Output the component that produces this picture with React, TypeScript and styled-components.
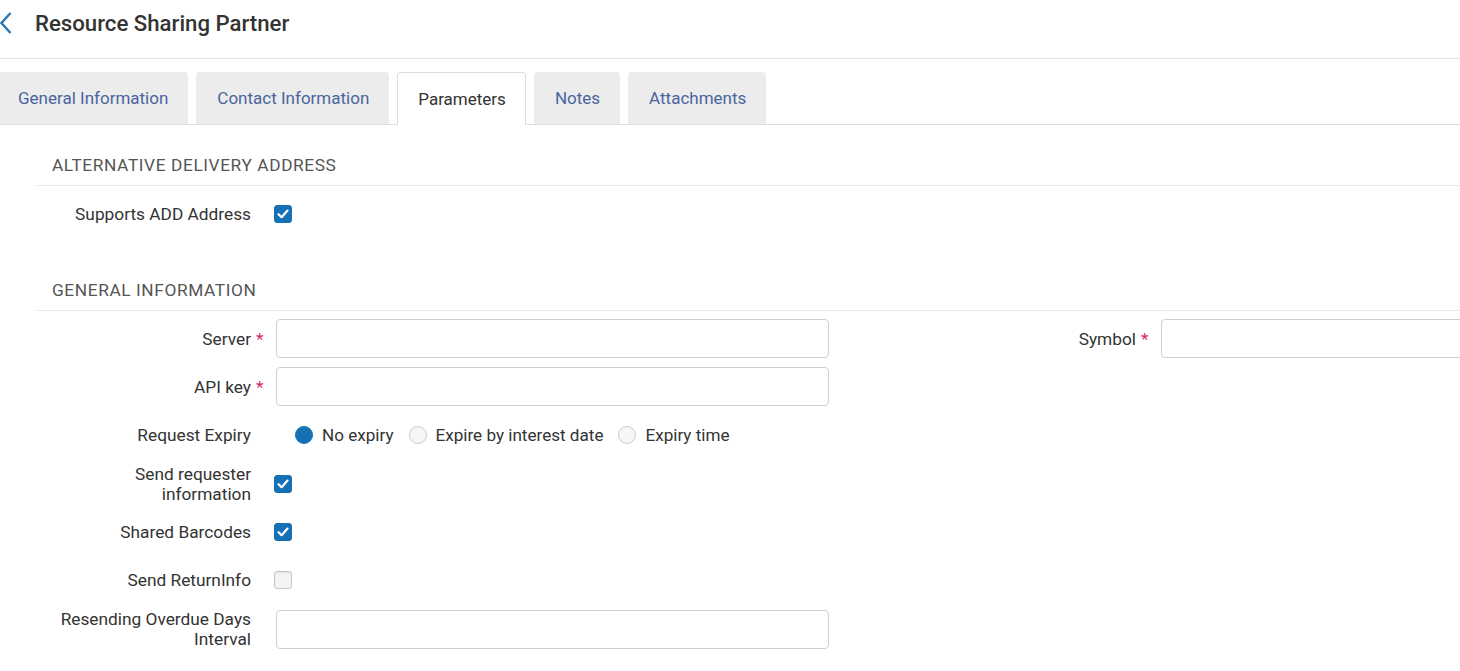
import styled, { createGlobalStyle } from "styled-components"

const GlobalStyle = createGlobalStyle`
    html, body {
        margin: 0;
        padding: 0;
        background: #fff;
        overflow: hidden;
    }
    body {
        font-family: Roboto, "Liberation Sans", Arial, sans-serif;
        color: #333;
    }
`

const Page = styled.div`
    width: 1460px;
    min-height: 671px;
    background: #fff;
`

const Header = styled.header`
    display: flex;
    align-items: center;
    height: 45px;
    padding-bottom: 13px;
    border-bottom: 1px solid #e4e4e4;
    gap: 23px;
    svg {
        flex: none;
    }
`

const Title = styled.h1`
    margin: 0;
    font-size: 22.2px;
    font-weight: 500;
    color: #333;
    line-height: 26px;
`

const TabBar = styled.nav`
    display: flex;
    gap: 8px;
    margin-top: 13px;
    margin-left: -3px;
    border-bottom: 1px solid #dcdcdc;
    height: 52px;
`

const Tab = styled.div<{ $active?: boolean }>`
    display: flex;
    align-items: center;
    padding: 0 19px 1px 20px;
    height: ${(p) => (p.$active ? "53px" : "52px")};
    box-sizing: border-box;
    border-radius: 4px 4px 0 0;
    font-size: 17px;
    background: ${(p) => (p.$active ? "#fff" : "#ececec")};
    color: ${(p) => (p.$active ? "#333" : "#4a659e")};
    border: ${(p) => (p.$active ? "1px solid #dcdcdc" : "1px solid transparent")};
    border-bottom: none;
    position: relative;
    z-index: ${(p) => (p.$active ? 1 : 0)};
`

const Content = styled.main`
    padding-left: 37px;
`

const Section = styled.section<{ $first?: boolean }>`
    margin-top: ${(p) => (p.$first ? "20px" : "36px")};
`

const SectionTitle = styled.h2`
    margin: 0;
    height: 40px;
    line-height: 41px;
    padding-left: 15px;
    font-size: 17.3px;
    font-weight: 400;
    letter-spacing: 0.6px;
    text-transform: uppercase;
    color: #555;
    border-bottom: 1px solid #e6e6e6;
`

const Rows = styled.div`
    display: flex;
    flex-direction: column;
    gap: 9.2px;
    padding-top: 8.5px;
`

const Row = styled.div`
    display: flex;
    gap: 93px;
`

const Field = styled.div`
    display: flex;
    align-items: center;
    gap: 12px;
    min-height: 39px;
`

const Label = styled.label`
    width: 227px;
    flex: none;
    display: flex;
    justify-content: flex-end;
    align-items: center;
    font-size: 17.3px;
    line-height: 20px;
    color: #333;
`

const LabelText = styled.span`
    max-width: 200px;
    text-align: right;
`

const Required = styled.span`
    width: 13px;
    flex: none;
    padding-left: 5px;
    box-sizing: border-box;
    color: #e0245e;
`

const TextInput = styled.input`
    width: 553px;
    height: 39px;
    box-sizing: border-box;
    border: 1px solid #cfcfcf;
    border-radius: 4px;
    font: inherit;
    padding: 0 10px;
    background: #fff;
    outline: none;
`

const Check = styled.span<{ $checked?: boolean }>`
    width: 18px;
    height: 18px;
    box-sizing: border-box;
    margin-left: -2px;
    border-radius: 3px;
    display: flex;
    align-items: center;
    justify-content: center;
    background: ${(p) => (p.$checked ? "#1570b4" : "#f4f4f4")};
    border: 1px solid ${(p) => (p.$checked ? "#1570b4" : "#c8c8c8")};
    box-shadow: ${(p) => (p.$checked ? "none" : "inset 0 1px 2px rgba(0,0,0,.08)")};
`

const RadioGroup = styled.div`
    display: flex;
    align-items: center;
    gap: 15px;
    padding-left: 19px;
`

const RadioOption = styled.span`
    display: flex;
    align-items: center;
    gap: 9px;
    font-size: 17.1px;
    color: #333;
`

const RadioDot = styled.span<{ $checked?: boolean }>`
    width: 18px;
    height: 18px;
    box-sizing: border-box;
    border-radius: 50%;
    background: ${(p) => (p.$checked ? "#1570b4" : "#f6f6f6")};
    border: 1px solid ${(p) => (p.$checked ? "#1570b4" : "#cbcbcb")};
`

const tabs = ["General Information", "Contact Information", "Parameters", "Notes", "Attachments"]

const FieldLabel = ({ text, required }: { text: string; required?: boolean }) => (
    <Label>
        <LabelText>{text}</LabelText>
        <Required>{required ? "*" : ""}</Required>
    </Label>
)

const Checkbox = ({ checked }: { checked?: boolean }) => (
    <Check $checked={checked}>
        {checked && (
            <svg width="12" height="10" viewBox="0 0 12 10">
                <polyline points="1.5,5.2 4.6,8.2 10.5,1.6" fill="none" stroke="#fff" strokeWidth="2.2" strokeLinecap="round" strokeLinejoin="round" />
            </svg>
        )}
    </Check>
)

export default function App() {
    return (
        <Page>
            <GlobalStyle />
            <Header>
                <svg width="12" height="22" viewBox="0 0 12 22">
                    <polyline points="10.5,1 1.5,11 10.5,21" fill="none" stroke="#2a78b6" strokeWidth="2.4" />
                </svg>
                <Title>Resource Sharing Partner</Title>
            </Header>
            <TabBar>
                {tabs.map((t) => (
                    <Tab key={t} $active={t === "Parameters"}>{t}</Tab>
                ))}
            </TabBar>
            <Content>
                <Section $first>
                    <SectionTitle>Alternative Delivery Address</SectionTitle>
                    <Rows>
                        <Field>
                            <FieldLabel text="Supports ADD Address" />
                            <Checkbox checked />
                        </Field>
                    </Rows>
                </Section>
                <Section>
                    <SectionTitle>General Information</SectionTitle>
                    <Rows>
                        <Row>
                            <Field>
                                <FieldLabel text="Server" required />
                                <TextInput />
                            </Field>
                            <Field>
                                <FieldLabel text="Symbol" required />
                                <TextInput />
                            </Field>
                        </Row>
                        <Field>
                            <FieldLabel text="API key" required />
                            <TextInput />
                        </Field>
                        <Field>
                            <FieldLabel text="Request Expiry" />
                            <RadioGroup>
                                <RadioOption><RadioDot $checked />No expiry</RadioOption>
                                <RadioOption><RadioDot />Expire by interest date</RadioOption>
                                <RadioOption><RadioDot />Expiry time</RadioOption>
                            </RadioGroup>
                        </Field>
                        <Field>
                            <FieldLabel text="Send requester information" />
                            <Checkbox checked />
                        </Field>
                        <Field>
                            <FieldLabel text="Shared Barcodes" />
                            <Checkbox checked />
                        </Field>
                        <Field>
                            <FieldLabel text="Send ReturnInfo" />
                            <Checkbox />
                        </Field>
                        <Field>
                            <FieldLabel text="Resending Overdue Days Interval" />
                            <TextInput />
                        </Field>
                    </Rows>
                </Section>
            </Content>
        </Page>
    )
}
